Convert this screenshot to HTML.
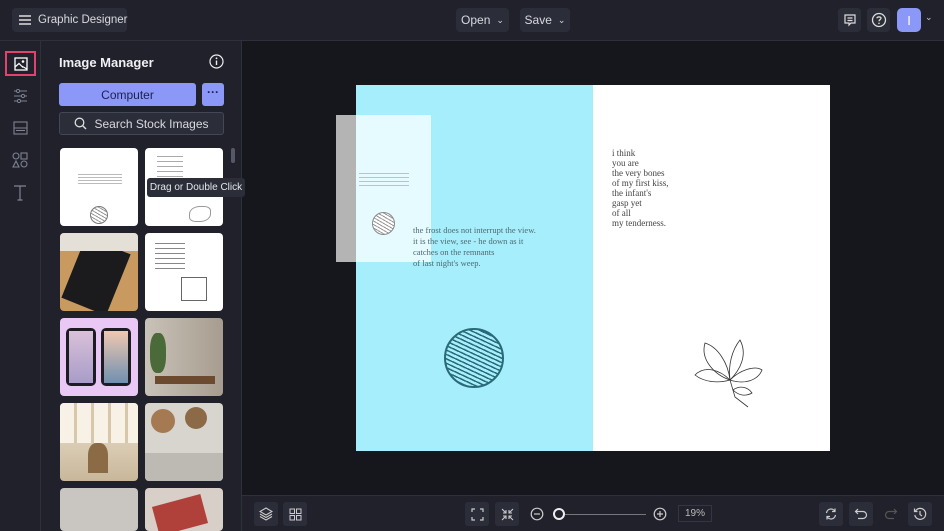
<!DOCTYPE html>
<html><head><style>
*{box-sizing:border-box;margin:0;padding:0}
html,body{width:944px;height:531px;overflow:hidden}
body{background:#16171d;font-family:"Liberation Sans",sans-serif;color:#e6e7ee;position:relative}
.top{position:absolute;left:0;top:0;width:944px;height:41px;background:#20212b;border-bottom:1px solid #2e303b}
.btn{position:absolute;background:#2b2d38;border-radius:4px;font-size:12px;color:#d8d9e0;display:flex;align-items:center;justify-content:center;white-space:nowrap}
.rail{position:absolute;left:0;top:41px;width:41px;height:490px;background:#20212b;border-right:1px solid #2e303b}
.panel{position:absolute;left:41px;top:41px;width:201px;height:490px;background:#20212b;border-right:1px solid #2e303b;overflow:hidden}
.bottom{position:absolute;left:242px;top:495px;width:702px;height:36px;background:#20212b;border-top:1px solid #2e303b}
.th{position:absolute;width:78px;height:78px;border-radius:4px;background:#fff;overflow:hidden}
svg{display:block}
.ic{position:absolute;width:24px;height:24px;border-radius:3px;background:#2b2d38;display:flex;align-items:center;justify-content:center}
</style></head><body>
<div class="top">
 <div class="btn" style="left:12px;top:8px;width:115px;height:24px;justify-content:flex-start;padding-left:6px;font-size:11.5px">
  <svg width="14" height="12" viewBox="0 0 14 12" style="margin-right:6px;flex:none"><path d="M1 2H13M1 6H13M1 10H13" stroke="#ddd" stroke-width="1.4"/></svg>Graphic Designer</div>
 <div class="btn" style="left:456px;top:8px;width:53px;height:24px">Open <span style="font-size:9px;margin-left:6px">&#8964;</span></div>
 <div class="btn" style="left:520px;top:8px;width:50px;height:24px">Save <span style="font-size:9px;margin-left:6px">&#8964;</span></div>
 <div class="btn" style="left:838px;top:8px;width:23px;height:24px"><svg width="14" height="14" viewBox="0 0 14 14"><path d="M2 2H12V10H8L6 12V10H2Z M4.5 5H9.5M4.5 7.5H9.5" fill="none" stroke="#ddd" stroke-width="1.2"/></svg></div>
 <div class="btn" style="left:867px;top:8px;width:23px;height:24px"><svg width="16" height="16" viewBox="0 0 16 16"><circle cx="8" cy="8" r="6.5" fill="none" stroke="#ddd" stroke-width="1.3"/><path d="M6 6.3C6 4.5 10 4.5 10 6.3C10 7.6 8 7.6 8 9.3" fill="none" stroke="#ddd" stroke-width="1.3"/><circle cx="8" cy="11.3" r=".8" fill="#ddd"/></svg></div>
 <div class="btn" style="left:897px;top:8px;width:24px;height:24px;background:#8b98f8;color:#fff;font-size:13px;border-radius:5px">I</div>
 <div style="position:absolute;left:925px;top:12px;font-size:9px;color:#ccc">&#8964;</div>
</div>
<div class="rail">
 <div style="position:absolute;left:5px;top:10px;width:31px;height:25px;border:2px solid #e0436e;display:flex;align-items:center;justify-content:center"><svg width="14" height="14" viewBox="0 0 14 14"><rect x="1" y="1" width="12" height="12" fill="none" stroke="#fff" stroke-width="1.3"/><circle cx="9" cy="4.5" r="1.3" fill="#fff"/><path d="M1 10L5 6.5L9 10.5M7.5 9L13 12" fill="none" stroke="#fff" stroke-width="1.2"/></svg></div>
 <svg style="position:absolute;left:13px;top:48px" width="15" height="14" viewBox="0 0 15 14"><path d="M1 2H14M1 7H14M1 12H14" stroke="#7f8290" stroke-width="1.1"/><circle cx="5" cy="2" r="1.6" fill="#20212b" stroke="#7f8290"/><circle cx="10" cy="7" r="1.6" fill="#20212b" stroke="#7f8290"/><circle cx="6" cy="12" r="1.6" fill="#20212b" stroke="#7f8290"/></svg>
 <svg style="position:absolute;left:13px;top:80px" width="15" height="14" viewBox="0 0 15 14"><rect x="1" y="1" width="13" height="12" fill="none" stroke="#7f8290" stroke-width="1.1"/><path d="M1 7H14M3 9.5H12" stroke="#7f8290" stroke-width="1.1"/></svg>
 <svg style="position:absolute;left:12px;top:111px" width="16" height="16" viewBox="0 0 16 16"><circle cx="4" cy="4" r="3" fill="none" stroke="#7f8290" stroke-width="1.1"/><rect x="9" y="1" width="6" height="6" fill="none" stroke="#7f8290" stroke-width="1.1"/><path d="M4 9L7 15H1Z" fill="none" stroke="#7f8290" stroke-width="1.1"/><circle cx="12" cy="12" r="3" fill="none" stroke="#7f8290" stroke-width="1.1"/></svg>
 <svg style="position:absolute;left:13px;top:144px" width="14" height="16" viewBox="0 0 14 16"><path d="M1 1H13M7 1V15M4.5 15H9.5" stroke="#7f8290" stroke-width="1.2" fill="none"/></svg>
</div>
<div class="panel">
 <div style="position:absolute;left:18px;top:14px;font-size:13px;font-weight:bold;color:#f0f0f5">Image Manager</div>
 <svg style="position:absolute;left:168px;top:13px" width="15" height="15" viewBox="0 0 15 15"><circle cx="7.5" cy="7.5" r="6.5" fill="none" stroke="#eee" stroke-width="1.2"/><path d="M7.5 6.5V11" stroke="#eee" stroke-width="1.4"/><circle cx="7.5" cy="4.3" r=".9" fill="#eee"/></svg>
 <div style="position:absolute;left:18px;top:42px;width:137px;height:23px;background:#8b98f8;border-radius:3px;color:#1d2050;font-size:12px;display:flex;align-items:center;justify-content:center">Computer</div>
 <div style="position:absolute;left:161px;top:42px;width:22px;height:23px;background:#8b98f8;border-radius:3px;color:#1d2050;font-size:12px;font-weight:bold;text-align:center;line-height:18px">···</div>
 <div style="position:absolute;left:18px;top:71px;width:165px;height:23px;background:#2b2d38;border:1px solid #444756;border-radius:3px;font-size:12px;color:#d8d9e0;display:flex;align-items:center;justify-content:center"><svg width="13" height="13" viewBox="0 0 13 13" style="margin-right:7px"><circle cx="5.5" cy="5.5" r="4.3" fill="none" stroke="#ddd" stroke-width="1.3"/><path d="M8.6 8.6L12 12" stroke="#ddd" stroke-width="1.4"/></svg>Search Stock Images</div>
 <div style="position:absolute;left:190px;top:107px;width:4px;height:15px;background:#555867;border-radius:2px"></div>
 <div class="th" style="left:19px;top:107px"><div style="position:absolute;left:18px;top:25px;width:44px;height:12px;background:repeating-linear-gradient(#fff 0 1px,#bbb 1px 2px,#fff 2px 3px)"></div><div style="position:absolute;left:30px;top:58px;width:18px;height:18px;border-radius:50%;border:1px solid #777;background:repeating-linear-gradient(30deg,#fff 0 2px,#999 2px 3px)"></div></div>
 <div class="th" style="left:104px;top:107px"><div style="position:absolute;left:12px;top:6px;width:26px;height:40px;background:repeating-linear-gradient(#fff 0 2px,#aaa 2px 3px,#fff 3px 5px)"></div><div style="position:absolute;left:44px;top:58px;width:22px;height:16px;border:1px solid #999;border-radius:50% 30%"></div></div>
 <div class="th" style="left:19px;top:192px;background:#c89a60"><div style="position:absolute;left:12px;top:10px;width:48px;height:66px;background:#1b1b1d;transform:rotate(22deg)"></div><div style="position:absolute;left:0;top:0;width:78px;height:18px;background:#e4e0d8"></div></div>
 <div class="th" style="left:104px;top:192px"><div style="position:absolute;left:10px;top:8px;width:30px;height:30px;background:repeating-linear-gradient(#fff 0 2px,#888 2px 3px,#fff 3px 5px)"></div><div style="position:absolute;left:36px;top:44px;width:26px;height:24px;border:1px solid #666"></div></div>
 <div class="th" style="left:19px;top:277px;background:#e9c8f5"><div style="position:absolute;left:6px;top:10px;width:30px;height:58px;background:#1c1c22;border-radius:5px"><div style="margin:3px;height:52px;background:linear-gradient(#d9c1d9,#a89cc8)"></div></div><div style="position:absolute;left:41px;top:10px;width:30px;height:58px;background:#1c1c22;border-radius:5px"><div style="margin:3px;height:52px;background:linear-gradient(#f0c8b0,#7090b0)"></div></div></div>
 <div class="th" style="left:104px;top:277px;background:linear-gradient(90deg,#c9c2b8,#a79c8f)"><div style="position:absolute;left:5px;top:15px;width:16px;height:40px;background:#4a6a3a;border-radius:40%"></div><div style="position:absolute;left:10px;top:58px;width:60px;height:8px;background:#6c4a30"></div></div>
 <div class="th" style="left:19px;top:362px;background:linear-gradient(#efe4d2,#c8b79a)"><div style="position:absolute;left:0;top:0;width:78px;height:40px;background:repeating-linear-gradient(90deg,#f8f2e6 0 14px,#d7c8ac 14px 17px)"></div><div style="position:absolute;left:28px;top:40px;width:20px;height:30px;background:#8a6b45;border-radius:40% 40% 0 0"></div></div>
 <div class="th" style="left:104px;top:362px;background:#d8d4ce"><div style="position:absolute;left:6px;top:6px;width:24px;height:24px;border-radius:50%;background:#a57a52"></div><div style="position:absolute;left:40px;top:4px;width:22px;height:22px;border-radius:50%;background:#8c6a48"></div><div style="position:absolute;left:0;top:50px;width:78px;height:28px;background:#bdbab4"></div></div>
 <div class="th" style="left:19px;top:447px;height:43px;background:#c9c6c2"></div>
 <div class="th" style="left:104px;top:447px;height:43px;background:#d8cfc8"><div style="position:absolute;left:10px;top:12px;width:50px;height:30px;background:#b0403a;transform:rotate(-15deg)"></div></div>
</div>
<div style="position:absolute;left:147px;top:178px;width:98px;height:19px;background:#2b2d38;border-radius:3px;font-size:10px;color:#e6e7ee;line-height:19px;text-align:center;white-space:nowrap">Drag or Double Click</div>
<div style="position:absolute;left:356px;top:85px;width:237px;height:366px;background:#a6eefc"></div>
<div style="position:absolute;left:593px;top:85px;width:237px;height:366px;background:#fff"></div>
<div style="position:absolute;left:336px;top:115px;width:95px;height:147px;background:#b4b4b4"></div>
<div style="position:absolute;left:356px;top:115px;width:75px;height:147px;background:#e6fbff"></div>
<div style="position:absolute;left:359px;top:171px;width:50px;height:16px;background:repeating-linear-gradient(transparent 0 2px,#b8c4c8 2px 3px,transparent 3px 4px)"></div>
<div style="position:absolute;left:372px;top:212px;width:23px;height:23px;border-radius:50%;border:1px solid #888;background:repeating-linear-gradient(30deg,#fff 0 2px,#999 2px 3px)"></div>
<div style="position:absolute;left:413px;top:225px;font-family:'Liberation Serif',serif;font-size:8.5px;line-height:11px;color:#4b6a70;white-space:nowrap">the frost does not interrupt the view.<br>it is the view, see - he down as it<br>catches on the remnants<br>of last night's weep.</div>
<div style="position:absolute;left:612px;top:148px;font-family:'Liberation Serif',serif;font-size:9px;line-height:10px;color:#444;white-space:nowrap">i think<br>you are<br>the very bones<br>of my first kiss,<br>the infant's<br>gasp yet<br>of all<br>my tenderness.</div>
<div style="position:absolute;left:444px;top:328px;width:60px;height:60px;border-radius:50%;background:repeating-linear-gradient(25deg,#2a6a78 0 1.5px,#a6eefc 1.5px 4px);border:2px solid #2a6a78"></div>
<svg style="position:absolute;left:690px;top:335px" width="80" height="75" viewBox="0 0 80 75"><g fill="none" stroke="#333" stroke-width=".8"><path d="M40 45C25 40 10 25 15 8C28 12 38 28 40 45Z"/><path d="M40 45C38 30 42 15 50 5C58 20 50 35 40 45Z"/><path d="M40 45C50 35 65 30 72 35C68 45 55 50 40 45Z"/><path d="M40 45C30 48 15 48 5 40C15 30 30 35 40 45Z"/><path d="M40 45L45 62L58 72"/><path d="M43 55C50 50 58 52 62 58C55 62 48 60 43 55Z"/></g></svg>
<div class="bottom">
 <div class="ic" style="left:12px;top:6px"><svg width="14" height="14" viewBox="0 0 14 14"><path d="M7 1L13 4.5L7 8L1 4.5Z M1 7L7 10.5L13 7 M1 9.5L7 13L13 9.5" fill="none" stroke="#ccc" stroke-width="1.1"/></svg></div>
 <div class="ic" style="left:41px;top:6px"><svg width="13" height="13" viewBox="0 0 13 13"><rect x="1" y="1" width="4.5" height="4.5" fill="none" stroke="#ccc"/><rect x="7.5" y="1" width="4.5" height="4.5" fill="none" stroke="#ccc"/><rect x="1" y="7.5" width="4.5" height="4.5" fill="none" stroke="#ccc"/><rect x="7.5" y="7.5" width="4.5" height="4.5" fill="none" stroke="#ccc"/></svg></div>
 <div class="ic" style="left:223px;top:6px"><svg width="13" height="13" viewBox="0 0 13 13"><path d="M1 4V1H4M9 1H12V4M12 9V12H9M4 12H1V9" fill="none" stroke="#ccc" stroke-width="1.2"/></svg></div>
 <div class="ic" style="left:253px;top:6px"><svg width="13" height="13" viewBox="0 0 13 13"><path d="M1 1L5 5M5 2V5H2M12 1L8 5M8 2V5H11M1 12L5 8M2 8H5V11M12 12L8 8M8 11V8H11" fill="none" stroke="#ccc" stroke-width="1.1"/></svg></div>
 <svg style="position:absolute;left:288px;top:11px" width="14" height="14" viewBox="0 0 14 14"><circle cx="7" cy="7" r="5.8" fill="none" stroke="#ccc" stroke-width="1.2"/><path d="M4 7H10" stroke="#ccc" stroke-width="1.2"/></svg>
 <div style="position:absolute;left:318px;top:18px;width:86px;height:1px;background:#777"></div>
 <div style="position:absolute;left:311px;top:12px;width:12px;height:12px;border-radius:50%;border:2px solid #eee;background:#20212b"></div>
 <svg style="position:absolute;left:411px;top:11px" width="14" height="14" viewBox="0 0 14 14"><circle cx="7" cy="7" r="5.8" fill="none" stroke="#ccc" stroke-width="1.2"/><path d="M4 7H10M7 4V10" stroke="#ccc" stroke-width="1.2"/></svg>
 <div style="position:absolute;left:436px;top:9px;width:34px;height:17px;border:1px solid #333642;font-size:10px;color:#bbb;text-align:center;line-height:15px">19%</div>
 <div class="ic" style="left:577px;top:6px"><svg width="14" height="14" viewBox="0 0 14 14"><path d="M2.5 6A4.5 4.5 0 0 1 11 4.5M11.5 8A4.5 4.5 0 0 1 3 9.5M11 1.5V4.5H8M3 12.5V9.5H6" fill="none" stroke="#ccc" stroke-width="1.2"/></svg></div>
 <div class="ic" style="left:607px;top:6px"><svg width="14" height="14" viewBox="0 0 14 14"><path d="M4 2L1.5 4.5L4 7M1.5 4.5H9A3.5 3.5 0 0 1 9 11.5H4" fill="none" stroke="#ccc" stroke-width="1.2"/></svg></div>
 <svg style="position:absolute;left:642px;top:11px" width="14" height="14" viewBox="0 0 14 14"><path d="M10 2L12.5 4.5L10 7M12.5 4.5H5A3.5 3.5 0 0 0 5 11.5H10" fill="none" stroke="#555" stroke-width="1.2"/></svg>
 <div class="ic" style="left:666px;top:6px"><svg width="14" height="14" viewBox="0 0 14 14"><path d="M2.5 4A5.5 5.5 0 1 1 1.8 8M1.5 1.5V4.5H4.5M7 4V7.5L9 9" fill="none" stroke="#ccc" stroke-width="1.2"/></svg></div>
</div>
</body></html>
